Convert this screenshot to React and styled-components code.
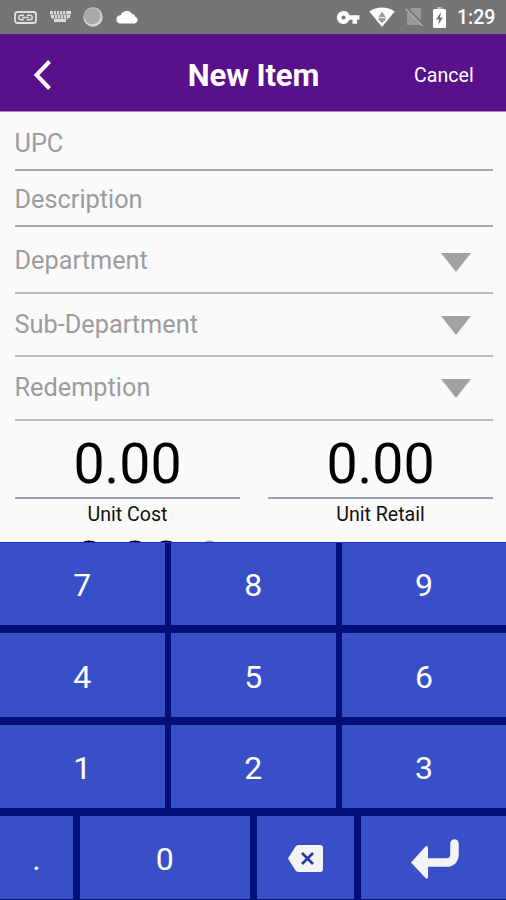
import React from 'react';
import styled, { createGlobalStyle } from 'styled-components';

const GlobalStyle = createGlobalStyle`
  * { box-sizing: border-box; }
  body { margin: 0; font-family: Roboto, "Liberation Sans", sans-serif; }
`;

const Screen = styled.div`
  width: 506px;
  height: 900px;
  display: flex;
  flex-direction: column;
  overflow: hidden;
  background: #fafafa;
`;

const StatusBar = styled.div`
  height: 34px;
  flex: none;
  display: flex;
  align-items: center;
  justify-content: space-between;
  padding: 0 10px 0 14px;
  background: #757575;
  color: #fff;
`;

const StatusGroup = styled.div`
  display: flex;
  align-items: center;
  gap: ${(p) => p.$gap}px;
  svg { display: block; flex: none; }
`;

const Clock = styled.span`
  width: 39px;
  margin-left: 2px;
  font-size: 19.5px;
  font-weight: 500;
  line-height: 34px;
  padding-top: 2px;
`;

const Header = styled.header`
  height: 78px;
  flex: none;
  display: grid;
  grid-template-columns: 120px 1fr 120px;
  align-items: center;
  background: #59108b;
  border-bottom: 1px solid #a583bf;
  color: #fff;
`;

const BackButton = styled.button`
  display: flex;
  padding: 4px 0 0 33px;
  border: 0;
  background: none;
  color: inherit;
`;

const Title = styled.h1`
  margin: 0;
  padding: 6px 0 0 1px;
  text-align: center;
  font-size: 31px;
  line-height: 36px;
  font-weight: 700;
  letter-spacing: -0.1px;
`;

const CancelButton = styled.button`
  padding: 6px 0 0 28px;
  border: 0;
  background: none;
  color: inherit;
  text-align: left;
  font: 400 19.6px/24px Roboto, sans-serif;
`;

const Form = styled.main`
  height: 430px;
  flex: none;
  overflow: hidden;
  padding: 0 13.5px 0 14.5px;
`;

const Field = styled.div`
  height: ${(p) => p.$height}px;
  display: flex;
  align-items: center;
  justify-content: space-between;
  padding-right: 21.5px;
  border-bottom: 2px solid ${(p) => (p.$select ? '#bcbdbe' : '#a5a6a7')};
  color: #9c9c9c;
`;

const FieldLabel = styled.span`
  padding-top: ${(p) => p.$drop}px;
  font-size: 25.3px;
  line-height: 30px;
`;

const Triangle = styled.svg`
  display: block;
  box-sizing: content-box;
  padding-top: ${(p) => p.$drop}px;
`;

const Amounts = styled.div`
  display: grid;
  grid-template-columns: 225px 225px;
  column-gap: 28px;
`;

const Amount = styled.div`
  text-align: center;
`;

const AmountValue = styled.div`
  height: 78px;
  display: flex;
  justify-content: center;
  padding-left: 1px;
  border-bottom: 2px solid #98a1ab;
  color: #000;
  font-size: 55.5px;
  line-height: 87px;
`;

const Percent = styled.span`
  width: 70px;
  margin-right: -70px;
  padding-left: 17px;
  color: #aaa;
  font-size: 55.5px;
`;

const AmountLabel = styled.div`
  height: 20px;
  padding: 4px 0 0 1px;
  color: #111;
  font-size: 19.6px;
  line-height: 24px;
`;

const Keypad = styled.div`
  height: 358px;
  flex: none;
  display: grid;
  grid-template-rows: 82px 83.5px 83.5px 83px;
  row-gap: 8px;
  padding-bottom: 1px;
  border-top: 1px solid #1c31b8;
  background: #020f78;
`;

const KeyRow = styled.div`
  display: grid;
  grid-template-columns: ${(p) => p.$columns};
  column-gap: 6.5px;
`;

const Key = styled.button`
  display: flex;
  align-items: center;
  justify-content: center;
  padding: ${(p) => p.$pad || '4px 0 0'};
  border: 0;
  background: #394fc7;
  color: #fff;
  font: 400 32px/38px Roboto, sans-serif;
  svg { display: block; }
`;

const LinkIcon = () => (
  <svg width="23" height="13" viewBox="0 0 23 13" fill="none" stroke="#e2e2e2">
    <rect x="1" y="1" width="21" height="11" rx="2.5" strokeWidth="1.8" />
    <path d="M10 4.300H7a2.200 2.200 0 0 0 0 4.400H10M13 4.300h3a2.200 2.200 0 0 1 0 4.400H13M8 6.500h7" strokeWidth="1.5" />
  </svg>
);

const KeyboardIcon = () => (
  <svg width="21" height="12" viewBox="0 0 21 12" fill="#d9d9d9">
    <path d="M0 0h3v3H0zM4 0h2v3H4zM7 0h2v3H7zM10 0h2v3h-2zM13 0h2v3h-2zM16 0h5v3h-5zM1 4h3v3H1zM5 4h2v3H5zM8 4h2v3H8zM11 4h2v3h-2zM14 4h2v3h-2zM17 4h3v3h-3zM4 8h12v3H4z" />
    <path d="M0 2.500h21v2H0zM2 6.500h16v2H2z" opacity=".45" />
  </svg>
);

const MoonIcon = () => (
  <svg width="20" height="20" viewBox="0 0 20 20">
    <circle cx="10" cy="10" r="9.700" fill="#d9d9d9" />
    <circle cx="9.300" cy="9.200" r="8.300" fill="#aaa" />
  </svg>
);

const CloudIcon = () => (
  <svg width="22" height="14" viewBox="0 0 22 14" fill="#fff">
    <path d="M4.500 13.500a4 4 0 0 1 .2-8.200A6.400 6.400 0 0 1 16.200 4c1.800 0 2.800 1.300 3 2.700a3.500 3.500 0 0 1-.4 6.800z" />
  </svg>
);

const VpnKeyIcon = () => (
  <svg width="23" height="13" viewBox="0 0 23 13" fill="#fff">
    <path fillRule="evenodd" d="M6.500 0a6.500 6.500 0 0 1 6 4.300H22.500v4.400H20v4h-4.500v-4h-3A6.500 6.500 0 1 1 6.500 0zm0 4.400a2.100 2.100 0 1 0 0 4.200 2.100 2.100 0 0 0 0-4.200z" />
  </svg>
);

const WifiIcon = () => (
  <svg width="26" height="20" viewBox="0 0 26 20">
    <path d="M.3 4.500C7.500-1 18.500-1 25.700 4.500L13 20z" fill="#fff" />
    <path d="M13 4.500l3.500 5.500v3L13 16l-3.500-3v-3z" fill="#9a9a9a" />
    <path d="M10 10.500h6" stroke="#eee" />
  </svg>
);

const NoSimIcon = () => (
  <svg width="19" height="20" viewBox="0 0 19 20">
    <path d="M6.500 1H16v17H2V6z" fill="#999" />
    <path d="M2 1l16 16" stroke="#757575" strokeWidth="1.800" />
    <path d="M.8 2l16.700 17" stroke="#aaa" strokeWidth="1.600" />
  </svg>
);

const BatteryIcon = () => (
  <svg width="13" height="21" viewBox="0 0 13 21">
    <path d="M4 0h5v3H4z" fill="#bdbdbd" />
    <path d="M1.500 2h10Q13 2 13 3.500v16Q13 21 11.500 21h-10Q0 21 0 19.500v-16Q0 2 1.500 2z" fill="#fff" />
    <path d="M8 5L3 12.500h3L5 18l5-7.500H7z" fill="#757575" />
  </svg>
);

const BackIcon = () => (
  <svg width="20" height="30" viewBox="0 0 20 30" fill="none" stroke="#fff" strokeWidth="4">
    <path d="M16.500 1.500L3.500 15l13 13.500" />
  </svg>
);

const BackspaceIcon = () => (
  <svg width="35" height="27" viewBox="0 0 35 27">
    <path d="M10.500 0H32q3 0 3 3v21q0 3-3 3H10.500Q8.500 27 7.400 25.300L0 13.500 7.400 1.700Q8.500 0 10.500 0z" fill="#f4f4f6" />
    <path d="M14 8l11 11M25 8L14 19" stroke="#2438a8" strokeWidth="2.600" />
  </svg>
);

const EnterIcon = () => (
  <svg width="48" height="40" viewBox="0 0 48 40">
    <path d="M43.500 4.500V15q0 8.500-8.500 8.500H14" fill="none" stroke="#f4f4f6" strokeWidth="8.500" strokeLinecap="round" />
    <path d="M0 23.500L14.500 7.500q2.500-1.500 2.500 1.500v29q0 3-2.500 1z" fill="#f4f4f6" />
  </svg>
);

const fields = [
  { label: 'UPC', height: 59, drop: 6 },
  { label: 'Description', height: 56, drop: 4 },
  { label: 'Department', height: 67, drop: 3, select: true, arrowDrop: 5 },
  { label: 'Sub-Department', height: 63, drop: 0, select: true, arrowDrop: 2 },
  { label: 'Redemption', height: 64, drop: 0, select: true, arrowDrop: 1 },
];

const digitRows = [
  { digits: ['7', '8', '9'], pad: '2px 0 0' },
  { digits: ['4', '5', '6'], pad: '4px 0 0' },
  { digits: ['1', '2', '3'], pad: '4px 0 0' },
];

export default function App() {
  return (
    <Screen>
      <GlobalStyle />
      <StatusBar>
        <StatusGroup $gap={12.5}>
          <LinkIcon /><KeyboardIcon /><MoonIcon /><CloudIcon />
        </StatusGroup>
        <StatusGroup $gap={9.5}>
          <VpnKeyIcon /><WifiIcon /><NoSimIcon />
          <StatusGroup $gap={9}><BatteryIcon /><Clock>1:29</Clock></StatusGroup>
        </StatusGroup>
      </StatusBar>
      <Header>
        <BackButton aria-label="Back"><BackIcon /></BackButton>
        <Title>New Item</Title>
        <CancelButton>Cancel</CancelButton>
      </Header>
      <Form>
        {fields.map((f) => (
          <Field key={f.label} $height={f.height} $select={f.select}>
            <FieldLabel $drop={f.drop}>{f.label}</FieldLabel>
            {f.select && (
              <Triangle width="30" height="19" viewBox="0 0 30 19" $drop={f.arrowDrop}>
                <path d="M0 0h30L15 19z" fill="#a2a2a2" />
              </Triangle>
            )}
          </Field>
        ))}
        <Amounts>
          <Amount><AmountValue>0.00</AmountValue><AmountLabel>Unit Cost</AmountLabel></Amount>
          <Amount><AmountValue>0.00</AmountValue><AmountLabel>Unit Retail</AmountLabel></Amount>
          <AmountValue>0.00<Percent>%</Percent></AmountValue>
        </Amounts>
      </Form>
      <Keypad>
        {digitRows.map((row) => (
          <KeyRow key={row.digits[0]} $columns="164.5px 164.5px 164px">
            {row.digits.map((n) => <Key key={n} $pad={row.pad}>{n}</Key>)}
          </KeyRow>
        ))}
        <KeyRow $columns="73px 170.5px 97.500px 1fr">
          <Key $pad="3px 0 0">.</Key>
          <Key $pad="3px 0 0">0</Key>
          <Key $pad="1px 0 0" aria-label="Backspace"><BackspaceIcon /></Key>
          <Key $pad="3px 0 0 4px" aria-label="Enter"><EnterIcon /></Key>
        </KeyRow>
      </Keypad>
    </Screen>
  );
}
